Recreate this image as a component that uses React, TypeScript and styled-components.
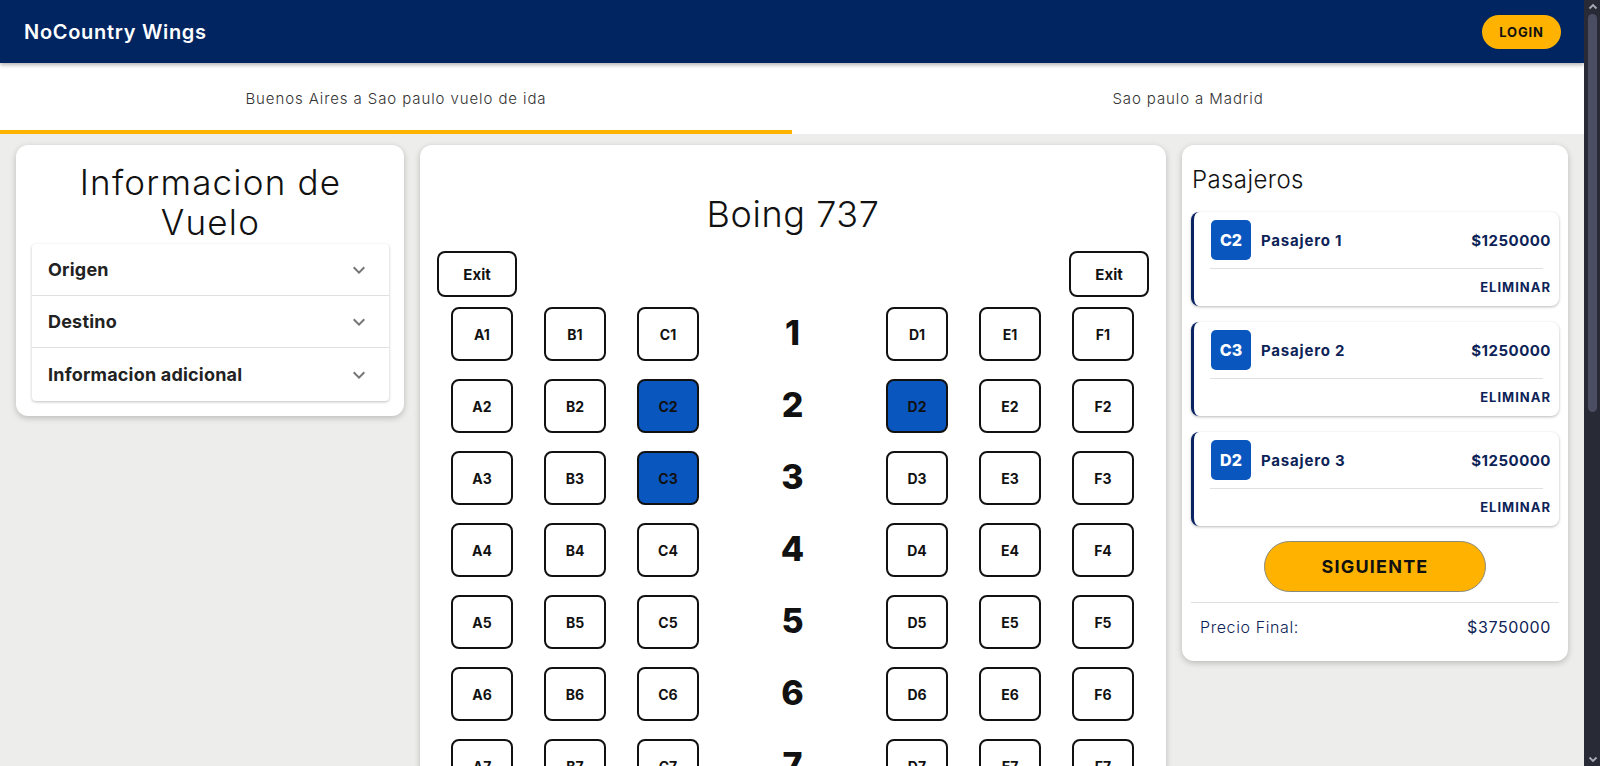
import React from "react";
import styled, { createGlobalStyle } from "styled-components";

const GlobalStyle = createGlobalStyle`
  body {
    margin: 0;
    background: #ededeb;
    color: #111;
    font-family: "Inter", "Noto Sans", sans-serif;
  }
  * { box-sizing: border-box; }
`;

const NAVY = "#012561";
const TEXT_NAVY = "#0d2357";
const BLUE = "#0a56bf";
const YELLOW = "#ffb300";

const Shell = styled.div`
  display: flex;
  height: 100vh;
  overflow: hidden;
`;

const Page = styled.div`
  flex: 1;
  min-width: 0;
  overflow: hidden;
`;

const ScrollRail = styled.div`
  width: 16px;
  flex: none;
  background: #282a35;
  display: flex;
  flex-direction: column;
  align-items: center;
  padding: 3px 0 3px 1px;
`;

const ScrollThumb = styled.div`
  width: 9px;
  height: 398px;
  margin-top: 3px;
  border-radius: 5px;
  background: #4b4d62;
`;

const RailSpacer = styled.div`
  flex: 1;
`;

const RailArrow = ({ down }: { down?: boolean }) => (
  <svg width="10" height="8" viewBox="0 0 10 8">
    <path
      d={down ? "M1.5 2.5 5 6 8.5 2.5" : "M1.5 5.5 5 2 8.5 5.5"}
      fill="none"
      stroke="#a9abb5"
      strokeWidth="1.8"
    />
  </svg>
);

const Header = styled.header`
  height: 63px;
  background: ${NAVY};
  display: flex;
  align-items: center;
  justify-content: space-between;
  padding: 0 23px 0 24px;
  box-shadow: 0 2px 4px rgba(0, 0, 0, 0.3);
  position: relative;
  z-index: 2;
`;

const Brand = styled.div`
  color: #fff;
  font-size: 20px;
  font-weight: 600;
  letter-spacing: 0.7px;
`;

const LoginButton = styled.button`
  height: 34px;
  width: 79px;
  border: none;
  border-radius: 17px;
  background: ${YELLOW};
  color: #111;
  font-family: inherit;
  font-size: 13px;
  font-weight: 700;
  letter-spacing: 0.8px;
`;

const Tabs = styled.nav`
  display: flex;
  background: #fff;
  height: 71px;
`;

const Tab = styled.div<{ $active?: boolean }>`
  flex: 1;
  display: flex;
  align-items: center;
  justify-content: center;
  font-size: 15px;
  font-weight: 300;
  letter-spacing: 0.9px;
  color: #333;
  border-bottom: 4px solid ${(p) => (p.$active ? YELLOW : "transparent")};
  padding-top: 4px;
`;

const Main = styled.main`
  display: grid;
  grid-template-columns: 388px 1fr 386px;
  gap: 16px;
  padding: 11px 16px 40px;
  align-items: start;
`;

const Card = styled.section`
  background: #fff;
  border-radius: 12px;
  box-shadow: 0 2px 6px rgba(0, 0, 0, 0.22);
`;

const InfoCard = styled(Card)`
  padding: 17px 15px 15px 16px;
`;

const BigTitle = styled.h1`
  margin: 0;
  font-size: 35px;
  line-height: 40px;
  font-weight: 300;
  letter-spacing: 1.2px;
  text-align: center;
  color: #111;
`;

const Accordion = styled.div`
  margin-top: 2px;
  border-radius: 4px;
  box-shadow: 0 1px 3px rgba(0, 0, 0, 0.25);
  background: #fff;
`;

const AccordionRow = styled.div`
  height: 52px;
  display: flex;
  align-items: center;
  justify-content: space-between;
  padding: 0 18px 0 16px;
  border-bottom: 1px solid #e0e0e0;
  font-size: 18px;
  font-weight: 700;
  letter-spacing: 0.2px;
  color: #222;
  &:last-child { border-bottom: none; height: 53px; }
`;

const Chevron = () => (
  <svg width="24" height="24" viewBox="0 0 24 24" fill="rgba(0,0,0,0.54)">
    <path d="M16.59 8.59 12 13.17 7.41 8.59 6 10l6 6 6-6z" />
  </svg>
);

const PlaneCard = styled(Card)`
  padding: 47px 0 40px;
`;

const PlaneTitle = styled.h2`
  margin: 0;
  font-size: 36px;
  line-height: 44px;
  font-weight: 300;
  letter-spacing: 0.6px;
  text-align: center;
  color: #111;
`;

const ExitRow = styled.div`
  display: flex;
  justify-content: space-between;
  padding: 0 17px 0 17px;
  margin-top: 15px;
`;

const ExitButton = styled.div`
  width: 80px;
  height: 46px;
  border: 2px solid #111;
  border-radius: 8px;
  display: flex;
  align-items: center;
  justify-content: center;
  font-size: 15px;
  font-weight: 700;
`;

const SeatGrid = styled.div`
  margin-top: 10px;
  padding: 0 32px 0 31px;
  display: grid;
  grid-template-columns: 62px 62px 62px 1fr 62px 62px 62px;
  column-gap: 31px;
  row-gap: 18px;
`;

const Seat = styled.div<{ $selected?: boolean }>`
  height: 54px;
  border: 2px solid #111;
  border-radius: 8px;
  background: ${(p) => (p.$selected ? BLUE : "#fff")};
  display: flex;
  align-items: center;
  justify-content: center;
  font-size: 14px;
  font-weight: 700;
  color: #111;
`;

const RowNumber = styled.div`
  display: flex;
  align-items: center;
  justify-content: center;
  padding-bottom: 4px;
  font-size: 34px;
  font-weight: 800;
  color: #111;
`;

const PassengerPanel = styled(Card)`
  padding: 20px 9px 24px 9px;
`;

const PanelTitle = styled.h3`
  margin: 0 0 17px 1px;
  font-size: 24px;
  line-height: 30px;
  font-weight: 300;
  letter-spacing: 0.4px;
  color: #111;
`;

const PassengerList = styled.div`
  display: flex;
  flex-direction: column;
  gap: 16px;
`;

const PassengerCard = styled.div`
  border-left: 3px solid #0a2463;
  border-radius: 8px;
  background: #fff;
  box-shadow: 0 1px 3px rgba(0, 0, 0, 0.28);
`;

const PassengerTop = styled.div`
  display: flex;
  align-items: center;
  padding: 8px 8px 0 17px;
`;

const Badge = styled.div`
  width: 40px;
  height: 40px;
  border-radius: 5px;
  background: ${BLUE};
  color: #fff;
  font-size: 16px;
  font-weight: 800;
  display: flex;
  align-items: center;
  justify-content: center;
`;

const PassengerName = styled.div`
  margin-left: 10px;
  flex: 1;
  font-size: 15px;
  font-weight: 700;
  letter-spacing: 0.8px;
  color: ${TEXT_NAVY};
`;

const Price = styled.div`
  font-size: 15px;
  font-weight: 700;
  letter-spacing: 0.5px;
  color: ${TEXT_NAVY};
`;

const Divider = styled.hr<{ $inset?: boolean }>`
  border: none;
  border-top: 1px solid #e0e0e0;
  margin: ${(p) => (p.$inset ? "8px 16px 0 16px" : "10px 0 0 0")};
`;

const ActionRow = styled.div`
  display: flex;
  justify-content: flex-end;
  padding: 9px 8px 10px;
`;

const RemoveButton = styled.span`
  font-size: 13px;
  line-height: 18px;
  font-weight: 700;
  letter-spacing: 1px;
  color: ${TEXT_NAVY};
`;

const NextButton = styled.button`
  display: block;
  margin: 15px auto 0;
  width: 222px;
  height: 51px;
  border-radius: 26px;
  border: 1px solid #8a8a7a;
  background: ${YELLOW};
  color: #111;
  font-family: inherit;
  font-size: 18px;
  font-weight: 700;
  letter-spacing: 1.2px;
`;

const TotalRow = styled.div`
  display: flex;
  justify-content: space-between;
  align-items: center;
  padding: 14px 8px 0 9px;
  font-size: 16px;
  letter-spacing: 0.6px;
  color: ${TEXT_NAVY};
`;

const TotalLabel = styled.span`
  font-weight: 300;
`;

const TotalValue = styled.span`
  font-weight: 400;
`;

const selected = new Set(["C2", "C3", "D2"]);
const rows = [1, 2, 3, 4, 5, 6, 7, 8, 9, 10];
const passengers = [
  { seat: "C2", name: "Pasajero 1" },
  { seat: "C3", name: "Pasajero 2" },
  { seat: "D2", name: "Pasajero 3" },
];

export default function App() {
  return (
    <>
      <GlobalStyle />
      <Shell>
        <Page>
          <Header>
            <Brand>NoCountry Wings</Brand>
            <LoginButton>LOGIN</LoginButton>
          </Header>
          <Tabs>
            <Tab $active>Buenos Aires a Sao paulo vuelo de ida</Tab>
            <Tab>Sao paulo a Madrid</Tab>
          </Tabs>
          <Main>
            <InfoCard>
              <BigTitle>Informacion de Vuelo</BigTitle>
              <Accordion>
                {["Origen", "Destino", "Informacion adicional"].map((l) => (
                  <AccordionRow key={l}>
                    {l}
                    <Chevron />
                  </AccordionRow>
                ))}
              </Accordion>
            </InfoCard>
            <PlaneCard>
              <PlaneTitle>Boing 737</PlaneTitle>
              <ExitRow>
                <ExitButton>Exit</ExitButton>
                <ExitButton>Exit</ExitButton>
              </ExitRow>
              <SeatGrid>
                {rows.map((r) => (
                  <React.Fragment key={r}>
                    {["A", "B", "C"].map((c) => (
                      <Seat key={c} $selected={selected.has(c + r)}>
                        {c + r}
                      </Seat>
                    ))}
                    <RowNumber>{r}</RowNumber>
                    {["D", "E", "F"].map((c) => (
                      <Seat key={c} $selected={selected.has(c + r)}>
                        {c + r}
                      </Seat>
                    ))}
                  </React.Fragment>
                ))}
              </SeatGrid>
            </PlaneCard>
            <PassengerPanel>
              <PanelTitle>Pasajeros</PanelTitle>
              <PassengerList>
                {passengers.map((p) => (
                  <PassengerCard key={p.seat}>
                    <PassengerTop>
                      <Badge>{p.seat}</Badge>
                      <PassengerName>{p.name}</PassengerName>
                      <Price>$1250000</Price>
                    </PassengerTop>
                    <Divider $inset />
                    <ActionRow>
                      <RemoveButton>ELIMINAR</RemoveButton>
                    </ActionRow>
                  </PassengerCard>
                ))}
              </PassengerList>
              <NextButton>SIGUIENTE</NextButton>
              <Divider />
              <TotalRow>
                <TotalLabel>Precio Final:</TotalLabel>
                <TotalValue>$3750000</TotalValue>
              </TotalRow>
            </PassengerPanel>
          </Main>
        </Page>
        <ScrollRail>
          <RailArrow />
          <ScrollThumb />
          <RailSpacer />
          <RailArrow down />
        </ScrollRail>
      </Shell>
    </>
  );
}
